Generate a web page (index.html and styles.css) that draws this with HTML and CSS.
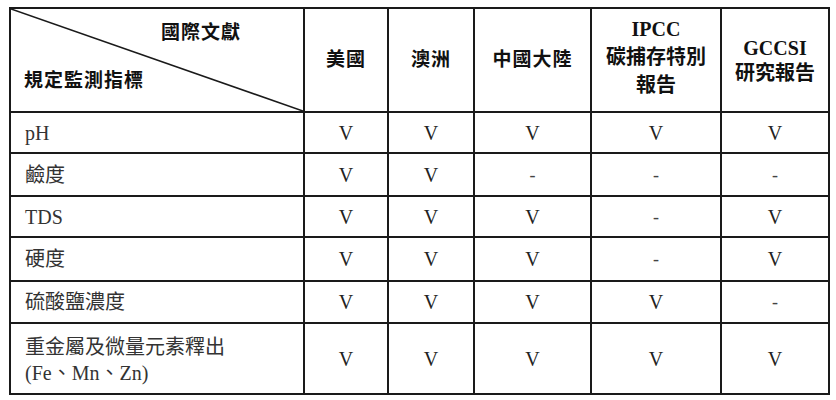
FILE: index.html
```html
<!DOCTYPE html>
<html lang="zh-Hant">
<head>
<meta charset="utf-8">
<title>規定監測指標</title>
<link rel="stylesheet" href="styles.css">
</head>
<body>
<table class="grid">
  <colgroup>
    <col class="c0"><col class="c1"><col class="c2"><col class="c3"><col class="c4"><col class="c5">
  </colgroup>
  <thead>
    <tr class="head">
      <th class="corner">
        <svg class="diag" viewBox="0 0 100 100" preserveAspectRatio="none" aria-hidden="true">
          <line x1="0" y1="0" x2="100" y2="100" stroke="#1a1a1a" stroke-width="1.6" vector-effect="non-scaling-stroke"/>
        </svg>
        <div class="corner-in">
          <span class="top">國際文獻</span>
          <span class="bottom">規定監測指標</span>
        </div>
      </th>
      <th>美國</th>
      <th>澳洲</th>
      <th>中國大陸</th>
      <th class="multi ipcc">IPCC<br>碳捕存特別<br>報告</th>
      <th class="multi gccsi">GCCSI<br>研究報告</th>
    </tr>
  </thead>
  <tbody>
    <tr class="r1"><td class="label">pH</td><td>V</td><td>V</td><td>V</td><td>V</td><td>V</td></tr>
    <tr class="r2"><td class="label">鹼度</td><td>V</td><td>V</td><td class="dash">-</td><td class="dash">-</td><td class="dash">-</td></tr>
    <tr class="r3"><td class="label">TDS</td><td>V</td><td>V</td><td>V</td><td class="dash">-</td><td>V</td></tr>
    <tr class="r4"><td class="label">硬度</td><td>V</td><td>V</td><td>V</td><td class="dash">-</td><td>V</td></tr>
    <tr class="r5"><td class="label">硫酸鹽濃度</td><td>V</td><td>V</td><td>V</td><td>V</td><td class="dash">-</td></tr>
    <tr class="r6"><td class="label two">重金屬及微量元素釋出<br>(Fe、Mn、Zn)</td><td>V</td><td>V</td><td>V</td><td>V</td><td>V</td></tr>
  </tbody>
</table>
</body>
</html>
```
FILE: styles.css
```css
html, body {
  margin: 0;
  padding: 0;
  background: #ffffff;
}
body {
  padding: 7px 0 0 9px;
  font-family: "Liberation Serif", "Noto Sans CJK TC", serif;
  color: #222222;
}
.grid {
  border-collapse: collapse;
  table-layout: fixed;
  width: 819px;
}
.c0 { width: 294px; }
.c1 { width: 84px; }
.c2 { width: 86px; }
.c3 { width: 117px; }
.c4 { width: 130px; }
.c5 { width: 108px; }

.grid th, .grid td {
  border: 2px solid #1a1a1a;
  padding: 0;
  text-align: center;
  vertical-align: middle;
  box-sizing: border-box;
}
.grid th {
  font-weight: 700;
  font-size: 19px;
  line-height: 24px;
  color: #111111;
  letter-spacing: 1px;
}
.head th { height: 104px; }
.grid th.multi { letter-spacing: 0; font-size: 20px; }
.grid th.ipcc { line-height: 28px; padding-bottom: 6px; }
.grid th.gccsi { line-height: 25px; padding-top: 1px; }

.corner {
  position: relative;
  padding: 0;
}
.diag {
  position: absolute;
  left: 0;
  top: 0;
  width: 100%;
  height: 100%;
}
.corner-in {
  display: flex;
  flex-direction: column;
  height: 100%;
  padding: 12px 0 18px 13px;
  box-sizing: border-box;
  justify-content: space-between;
  text-align: left;
}
.corner-in .top { padding-left: 137px; }

.grid td {
  font-size: 20px;
  line-height: 26px;
}
.grid td.label {
  text-align: left;
  padding-left: 14px;
  color: #333333;
}
.grid td.dash { font-size: 18px; color: #444444; }
.r1 td { height: 41px; }
.r2 td { height: 43px; }
.r3 td { height: 41px; }
.r4 td { height: 44px; }
.r5 td { height: 42px; }
.r6 td { height: 71px; }
.grid td.two { padding-top: 2px; }
```
